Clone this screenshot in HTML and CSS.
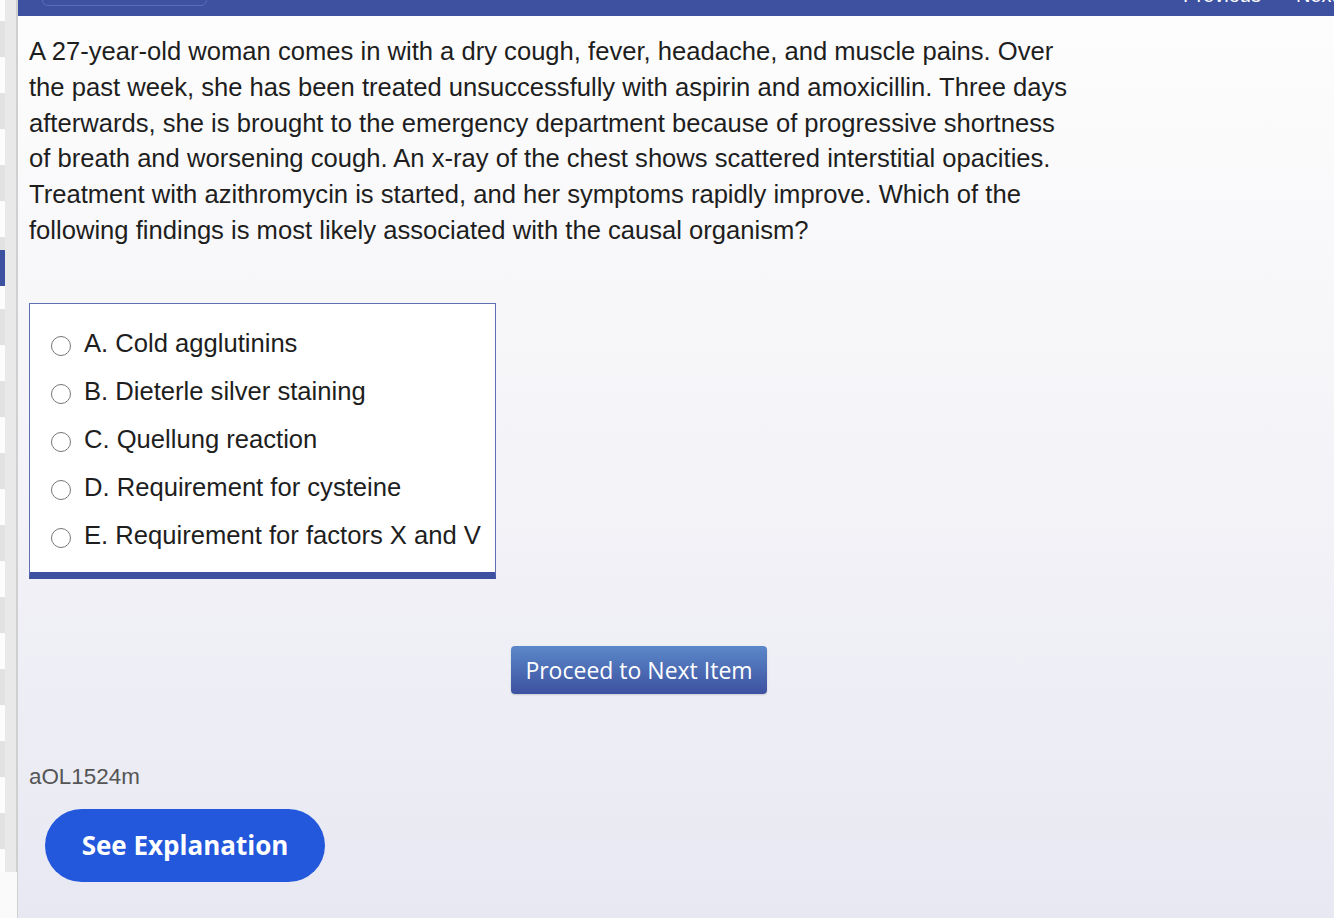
FILE: index.html
```html
<!DOCTYPE html>
<html>
<head>
<meta charset="utf-8">
<link rel="stylesheet" href="styles.css">
</head>
<body>
<div class="app">
  <aside class="side">
    <div class="rows"></div>
    <div class="track"></div>
  </aside>
  <main class="main">
    <header class="topbar">
      <div class="block-btn">Block: 1 of 1</div>
      <div class="nav">
        <span class="nav-item">Previous</span>
        <span class="nav-item">Next</span>
      </div>
    </header>
    <section class="content">
      <p class="stem">A 27-year-old woman comes in with a dry cough, fever, headache, and muscle pains. Over the past week, she has been treated unsuccessfully with aspirin and amoxicillin. Three days afterwards, she is brought to the emergency department because of progressive shortness of breath and worsening cough. An x-ray of the chest shows scattered interstitial opacities. Treatment with azithromycin is started, and her symptoms rapidly improve. Which of the following findings is most likely associated with the causal organism?</p>
      <div class="answers">
        <label class="opt"><span class="radio"></span>A. Cold agglutinins</label>
        <label class="opt"><span class="radio"></span>B. Dieterle silver staining</label>
        <label class="opt"><span class="radio"></span>C. Quellung reaction</label>
        <label class="opt"><span class="radio"></span>D. Requirement for cysteine</label>
        <label class="opt"><span class="radio"></span>E. Requirement for factors X and V</label>
      </div>
      <div class="proceed-row"><button class="proceed">Proceed to Next Item</button></div>
      <div class="qid">aOL1524m</div>
      <button class="explain">See Explanation</button>
    </section>
  </main>
</div>
</body>
</html>
```
FILE: styles.css
```css
html, body {
  margin: 0;
  padding: 0;
  height: 100%;
}
body {
  font-family: "Liberation Sans", Arial, sans-serif;
  overflow: hidden;
}
.app {
  display: flex;
  height: 918px;
}
.side {
  width: 17px;
  flex: none;
  display: flex;
  background: #fafafa;
  border-right: 1px solid #d0d0d0;
}
.rows {
  width: 5px;
  height: 872px;
  background:
    linear-gradient(#3d51a0, #3d51a0) 0 250px / 5px 36px no-repeat,
    repeating-linear-gradient(#fcfcfc 0 36px, #e2e2e2 36px 72px) 0 -15px / 5px 100%;
}
.track {
  width: 12px;
  height: 872px;
  background: #e9e9e9;
  border-right: 1px solid #cfcfcf;
  box-sizing: border-box;
}
.main {
  flex: 1;
  display: flex;
  flex-direction: column;
  background: linear-gradient(#fdfdfd 0%, #f4f4f8 50%, #e7e8f2 100%);
}
.topbar {
  height: 16px;
  background: #3d51a0;
  display: flex;
  justify-content: space-between;
  align-items: flex-end;
  overflow: hidden;
  flex: none;
}
.block-btn {
  margin-left: 24px;
  width: 165px;
  height: 30px;
  margin-bottom: 10px;
  border: 1px solid #5a6db8;
  border-radius: 6px;
  box-sizing: border-box;
  color: #fff;
  font-size: 20px;
  display: flex;
  align-items: flex-end;
  justify-content: center;
  padding-bottom: 4px;
  line-height: 1;
}
.nav {
  display: flex;
  gap: 35px;
  margin-right: -3px;
  margin-bottom: 11px;
}
.nav-item {
  color: #fff;
  font-size: 20px;
  line-height: 1;
}
.content {
  padding: 18px 0 0 11px;
  display: flex;
  flex-direction: column;
  align-items: flex-start;
}
.stem {
  margin: 0;
  width: 1050px;
  font-size: 25.6px;
  line-height: 35.8px;
  color: #1e1e1e;
}
.answers {
  margin-top: 54px;
  width: 467px;
  box-sizing: border-box;
  background: #fff;
  border: 1px solid #6070b6;
  border-bottom: 7px solid #3d51a0;
  padding: 22px 0 20px 21px;
  display: flex;
  flex-direction: column;
  gap: 14px;
}
.opt {
  display: flex;
  align-items: center;
  gap: 13px;
  font-size: 25.6px;
  line-height: 34px;
  color: #1e1e1e;
  white-space: nowrap;
}
.radio {
  width: 18px;
  height: 18px;
  border: 1px solid #777;
  border-radius: 50%;
  background: #fff;
  margin-top: 7px;
  flex: none;
}
.proceed-row {
  margin-top: 67px;
  padding-left: 482px;
}
.proceed {
  width: 256px;
  height: 48px;
  border: none;
  border-radius: 4px;
  background: linear-gradient(#5b88c9, #3d51a0);
  color: #fff;
  font-family: "Open Sans", sans-serif;
  font-size: 23px;
  padding: 0;
  box-shadow: 0 1px 2px rgba(0,0,0,0.15);
}
.qid {
  margin-top: 71px;
  font-size: 22.4px;
  color: #555;
  line-height: 24px;
}
.explain {
  margin-top: 20px;
  margin-left: 16px;
  width: 280px;
  height: 73px;
  border: none;
  border-radius: 37px;
  background: #2458dc;
  color: #fff;
  font-family: "Open Sans", sans-serif;
  font-weight: 700;
  font-size: 26px;
  padding: 0;
}
```
